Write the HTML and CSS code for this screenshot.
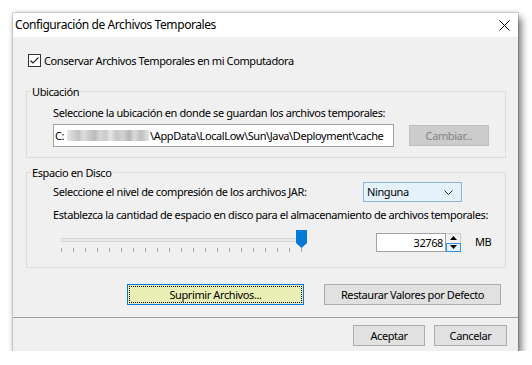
FILE: index.html
```html
<!DOCTYPE html>
<html lang="es">
<head>
<meta charset="utf-8">
<title>Configuración de Archivos Temporales</title>
<link rel="stylesheet" href="styles.css">
</head>
<body>
<div class="window">
  <div class="titlebar">
    <span class="title">Configuración de Archivos Temporales</span>
    <svg class="close" width="11" height="11" viewBox="0 0 11 11"><path d="M0.5 0.5 L10.5 10.5 M10.5 0.5 L0.5 10.5" stroke="#000" stroke-width="1" fill="none"/></svg>
  </div>
  <div class="client">
    <div class="check-row">
      <span class="checkbox"><svg width="11" height="11" viewBox="0 0 11 11"><path d="M1.5 5.5 L4 8 L9.5 2.5" stroke="#222" stroke-width="1.1" fill="none"/></svg></span>
      <span>Conservar Archivos Temporales en mi Computadora</span>
    </div>

    <fieldset class="group g-loc">
      <legend>Ubicación</legend>
      <div class="inner">
        <div class="text">Seleccione la ubicación en donde se guardan los archivos temporales:</div>
        <div class="loc-row">
          <div class="field path">C:<span class="blur"></span>\AppData\LocalLow\Sun\Java\Deployment\cache</div>
          <div class="btn disabled cambiar">Cambiar...</div>
        </div>
      </div>
    </fieldset>

    <fieldset class="group g-disk">
      <legend>Espacio en Disco</legend>
      <div class="inner">
        <div class="jar-row">
          <span class="text">Seleccione el nivel de compresión de los archivos JAR:</span>
          <div class="combo"><span>Ninguna</span><svg class="chev" width="9" height="5" viewBox="0 0 9 5"><path d="M0.5 0.5 L4.5 4.5 L8.5 0.5" stroke="#333" stroke-width="1" fill="none"/></svg></div>
        </div>
        <div class="text est">Establezca la cantidad de espacio en disco para el almacenamiento de archivos temporales:</div>
        <div class="size-row">
          <div class="slider">
            <div class="track"></div>
            <div class="ticks">
              <i></i><i></i><i></i><i></i><i></i><i></i><i></i><i></i><i></i><i></i><i></i><i></i><i></i><i></i><i></i><i></i><i></i><i></i><i></i><i></i><i></i>
            </div>
            <svg class="thumb" width="11" height="18" viewBox="0 0 11 18"><path d="M0 0 H11 V13 L5.5 18 L0 13 Z" fill="#0078d7"/></svg>
          </div>
          <div class="spin">
            <div class="field num">32768</div>
            <div class="spin-btns">
              <div class="sb up"><svg width="7" height="4" viewBox="0 0 7 4"><path d="M0 4 L3.5 0 L7 4 Z" fill="#000"/></svg></div>
              <div class="sb down"><svg width="7" height="4" viewBox="0 0 7 4"><path d="M0 0 L7 0 L3.5 4 Z" fill="#000"/></svg></div>
            </div>
          </div>
          <span class="mb">MB</span>
        </div>
      </div>
    </fieldset>

    <div class="action-row">
      <div class="btn focus wide"><span>Suprimir Archivos...</span></div>
      <div class="btn wide">Restaurar Valores por Defecto</div>
    </div>
  </div>
  <div class="footer">
    <div class="btn ok">Aceptar</div>
    <div class="btn cancel">Cancelar</div>
  </div>
</div>
</body>
</html>
```

FILE: styles.css
```css
* { box-sizing: border-box; }
html, body { margin: 0; padding: 0; background: #fff; }
body {
  font-family: "Noto Sans", "Open Sans", sans-serif;
  font-size: 11px;
  line-height: 14px;
  letter-spacing: -0.4px;
  color: #000;
}
.window {
  margin: 13px 0 0 13px;
  width: 505px;
  height: 338px;
  background: #f0f0f0;
  box-shadow: 0 0 0 1px rgba(0,0,0,0.12), 4px 5px 7px rgba(0,0,0,0.45), 0 0 6px rgba(0,0,0,0.2);
  display: flex;
  flex-direction: column;
}
.titlebar {
  height: 24px;
  background: #fff;
  display: flex;
  align-items: center;
  justify-content: space-between;
  padding: 0 8px 0 2px;
  flex: none;
}
.title { font-size: 12px; line-height: 16px; letter-spacing: -0.42px; }
.close { display: block; }
.client {
  height: 280px;
  padding: 17px 12px 0 13px;
  flex: none;
}
.check-row {
  display: flex;
  align-items: center;
  height: 13px;
  margin-left: 2px;
  gap: 3px;
}
.checkbox {
  width: 13px; height: 13px;
  border: 1px solid #333;
  background: #fff;
  display: flex;
  align-items: center;
  justify-content: center;
}
.checkbox svg { display: block; }

.group {
  margin: 0;
  padding: 0;
  min-width: 0;
  width: 480px;
  border: 1px solid #dcdcdc;
}
.group legend {
  margin-left: 4px;
  padding: 0 1px;
  line-height: 13px;
  font-size: 11px;
}
.g-loc { margin-top: 18px; }
.g-disk { margin-top: 8px; }
.inner { padding-left: 26px; }
.g-loc .inner { padding-top: 8px; padding-bottom: 10px; }
.g-disk .inner { padding-top: 3px; padding-bottom: 14px; }

.text { line-height: 14px; white-space: nowrap; }
.loc-row {
  margin-top: 4px;
  display: flex;
  align-items: center;
  gap: 15px;
}
.field {
  background: #fff;
  border: 1px solid #a2a2a2;
  white-space: nowrap;
}
.path {
  width: 341px;
  height: 23px;
  padding-left: 1px;
  line-height: 21px;
  overflow: hidden;
}
.blur {
  display: inline-block;
  width: 82px;
  height: 11px;
  margin: 0 1px 0 3px;
  vertical-align: -1px;
  background:
    linear-gradient(90deg, #e4e4e4 0, #c9c9c9 8%, #b8b8b8 14%, #d7d7d7 20%, #c2c2c2 27%, #aeaeb4 34%, #cfcfcf 40%, #c0c0c4 47%, #e0e0e0 53%, #bdbdbd 60%, #cacaca 68%, #a9a9ad 76%, #d5d5d5 82%, #b3b3b3 90%, #dddddd 100%);
  opacity: 0.85;
}
.btn {
  background: #e1e1e1;
  border: 1px solid #adadad;
  height: 21px;
  display: flex;
  align-items: center;
  justify-content: center;
  white-space: nowrap;
  line-height: 14px;
}
.cambiar {
  width: 80px;
  height: 21px;
}
.disabled {
  background: #cccccc;
  border-color: #bfbfbf;
  color: #838383;
}

.jar-row {
  display: grid;
  grid-template-columns: 310px 99px;
  align-items: center;
  height: 20px;
}
.combo {
  height: 20px;
  background: #e5f1fb;
  border: 1px solid #8cb4dc;
  display: flex;
  align-items: center;
  justify-content: space-between;
  padding: 0 8px 0 3px;
}
.chev { display: block; margin-top: 1px; }
.est { margin-top: 6px; }
.size-row {
  margin-top: 6px;
  height: 25px;
  display: flex;
  align-items: flex-start;
}
.slider {
  position: relative;
  margin-left: 8px;
  width: 241px;
  height: 25px;
}
.track {
  position: absolute;
  left: 0; right: 0;
  top: 10px;
  height: 4px;
  background: #e7eaea;
  border: 1px solid #d6d6d6;
}
.ticks {
  position: absolute;
  left: 0; right: 0;
  top: 20px;
  height: 4px;
  display: flex;
  justify-content: space-between;
}
.ticks i {
  display: block;
  width: 1px;
  height: 4px;
  background: #a8a8a8;
}
.thumb {
  position: absolute;
  left: 235px;
  top: 2px;
  display: block;
}
.spin {
  margin-left: 74px;
  margin-top: 5px;
  display: flex;
  height: 19px;
}
.num {
  width: 70px;
  height: 19px;
  text-align: right;
  padding-right: 2px;
  line-height: 17px;
}
.spin-btns {
  width: 15px;
  height: 19px;
  display: flex;
  flex-direction: column;
}
.sb {
  height: 9.5px;
  display: flex;
  align-items: center;
  justify-content: center;
  background: #f0f0f0;
  border: 1px solid #d0d0d0;
  border-left: none;
}
.sb svg { display: block; }
.sb.up { border-bottom: none; }
.sb.down { background: #e5f1fb; border: 1px solid #3c8ee0; }
.mb { margin-left: 14px; margin-top: 7px; }

.action-row {
  margin-top: 16px;
  padding-left: 101px;
  display: flex;
  gap: 20px;
}
.wide { width: 177px; }
.focus {
  background: #e9efb4;
  border-color: #0078d7;
  outline: 1px dotted #000;
  outline-offset: -3px;
}

.footer {
  flex: none;
  height: 34px;
  border-top: 1px solid #a0a0a0;
  padding: 7px 11px 0 0;
  display: flex;
  justify-content: flex-end;
  gap: 9px;
}
.ok { width: 72px; }
.cancel { width: 73px; }
```
